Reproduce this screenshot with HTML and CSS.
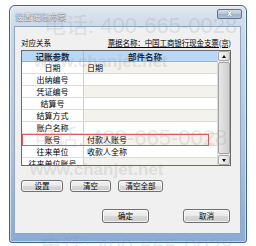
FILE: index.html
```html
<!DOCTYPE html>
<html>
<head>
<meta charset="utf-8">
<link rel="stylesheet" href="styles.css">
</head>
<body>
<div class="window">
  <div class="titlebar">
    <span class="title">设置记账方案</span>
    <div class="close">x</div>
  </div>
  <div class="client">
    <div class="info">
      <span class="label">对应关系</span>
      <span class="bill">票据名称：中国工商银行现金支票(京)</span>
    </div>
    <div class="grid">
      <div class="rows">
        <div class="row head"><div class="c1">记账参数</div><div class="c2">部件名称</div></div>
        <div class="row alt"><div class="c1">日期</div><div class="c2">日期</div></div>
        <div class="row"><div class="c1">出纳编号</div><div class="c2"></div></div>
        <div class="row alt"><div class="c1">凭证编号</div><div class="c2"></div></div>
        <div class="row"><div class="c1">结算号</div><div class="c2"></div></div>
        <div class="row alt"><div class="c1">结算方式</div><div class="c2"></div></div>
        <div class="row"><div class="c1">账户名称</div><div class="c2"></div></div>
        <div class="row alt"><div class="c1">账号</div><div class="c2">付款人账号</div></div>
        <div class="row"><div class="c1">往来单位</div><div class="c2">收款人全称</div></div>
        <div class="row alt"><div class="c1">往来单位账号</div><div class="c2"></div></div>
      </div>
      <div class="scrollbar">
        <div class="arrow up"></div>
        <div class="thumb"></div>
        <div class="arrow down"></div>
      </div>
      <div class="highlight"></div>
    </div>
    <div class="btnrow">
      <button class="btn w42">设置</button>
      <button class="btn w41">清空</button>
      <button class="btn w45">清空全部</button>
    </div>
    <div class="okrow">
      <button class="btn big">确定</button>
      <button class="btn big">取消</button>
    </div>
  </div>
</div>
<div class="watermarks">
  <div class="wm phone p1">电话: 400-665-0028</div>
  <div class="wm site s1">www.chanjet.net</div>
  <div class="wm phone p2">电话: 400-665-0028</div>
  <div class="wm site s2">www.chanjet.net</div>
  <div class="wm phone p3">电话: 400-665-0028</div>
</div>
</body>
</html>
```
FILE: styles.css
```css
html, body {
  margin: 0;
  padding: 0;
}
body {
  width: 256px;
  height: 246px;
  overflow: hidden;
  background: #ffffff;
  position: relative;
  font-family: "Noto Sans CJK SC", "Noto Sans", sans-serif;
  font-size: 8px;
  color: #000000;
}
.window {
  margin: 5px 0 0 9px;
  width: 238px;
  height: 238px;
  box-sizing: border-box;
  border: 1px solid #3f6390;
  border-radius: 6px 6px 3px 3px;
  background: linear-gradient(#dfe8f1 0, #ccdae8 20px, #b0c6df 55%, #8aabd2 100%);
  display: flex;
  flex-direction: column;
  padding: 0 5px 8px 4px;
  box-shadow: inset 0 0 0 1px rgba(255,255,255,0.5);
}
.titlebar {
  height: 20px;
  display: flex;
  justify-content: space-between;
  align-items: flex-start;
}
.title {
  margin: 5px 0 0 1px;
  font-size: 8.5px;
  line-height: 10px;
  color: #ffffff;
  text-shadow: 0 0 1px rgba(20, 30, 45, 0.9), 0 1px 1px rgba(40, 55, 75, 0.5);
}
.close {
  margin: 3px -1px 0 0;
  width: 25px;
  height: 10px;
  box-sizing: border-box;
  border: 1px solid #5d7491;
  border-radius: 2px;
  background: linear-gradient(#d3dde8 0, #b8c7d8 50%, #9fb2c8 51%, #b2c3d6 100%);
  color: #ffffff;
  font-family: "DejaVu Sans", sans-serif;
  font-size: 8px;
  line-height: 7px;
  text-align: center;
  font-weight: bold;
  text-shadow: 0 0 1px #333;
}
.client {
  flex: 1;
  background: #f0f0f0;
  border: 1px solid #90a6c0;
  padding: 0 9px 0 6px;
  display: flex;
  flex-direction: column;
}
.info {
  margin-top: 9px;
  height: 12px;
  display: flex;
  justify-content: space-between;
  align-items: center;
  font-size: 7.5px;
}
.bill {
  text-decoration: underline;
  letter-spacing: -0.1px;
}
.grid {
  position: relative;
  margin-top: 2px;
  height: 116px;
  box-sizing: border-box;
  border: 1px solid #6a6a6a;
  display: flex;
  background: #ffffff;
  overflow: hidden;
}
.rows {
  flex: 1;
  display: flex;
  flex-direction: column;
}
.row {
  height: 12px;
  flex: none;
  display: flex;
  box-sizing: border-box;
  border-bottom: 1px solid #dcdcd4;
  background: #ffffff;
  line-height: 11px;
}
.row.alt {
  background: #f3f2ec;
}
.row.head {
  height: 11px;
  background: #b9d7f6;
  border-bottom: 1px solid #8fb3dc;
  font-size: 8.5px;
  line-height: 10px;
  font-weight: bold;
  color: #1a2a3a;
}
.c1 {
  width: 62px;
  flex: none;
  box-sizing: border-box;
  border-right: 1px solid #d0d0c8;
  text-align: center;
  white-space: nowrap;
  background: #ffffff;
}
.row.head .c1 {
  background: #b9d7f6;
  border-right-color: #a0c0e4;
}
.c2 {
  flex: 1;
  padding-left: 3px;
  white-space: nowrap;
}
.row.head .c2 {
  padding-left: 44px;
}
.scrollbar {
  width: 12px;
  flex: none;
  background: #e9e9e9;
  display: flex;
  flex-direction: column;
  border-left: 1px solid #d8d8d8;
}
.arrow {
  height: 10px;
  box-sizing: border-box;
  border: 1px solid #a8a8a8;
  border-radius: 2px;
  background: linear-gradient(90deg, #f4f4f4, #dcdcdc);
  position: relative;
}
.arrow::after {
  content: "";
  position: absolute;
  left: 3px;
  top: 3px;
  border-left: 2px solid transparent;
  border-right: 2px solid transparent;
}
.arrow.up::after {
  border-bottom: 3px solid #111;
}
.arrow.down::after {
  border-top: 3px solid #111;
}
.thumb {
  flex: 1;
  margin: 1px 0;
  box-sizing: border-box;
  border: 1px solid #a4a4a4;
  border-radius: 2px;
  background: linear-gradient(90deg, #e6e6e6, #cfcfcf);
}
.highlight {
  position: absolute;
  left: 0;
  top: 83px;
  width: 187px;
  height: 12px;
  box-sizing: border-box;
  border: 1px solid #e05a5a;
}
.btnrow {
  margin-top: 14px;
  display: flex;
  gap: 7px;
}
.okrow {
  margin-top: 17px;
  display: flex;
  justify-content: flex-end;
  gap: 34px;
  padding-right: 1px;
}
.btn {
  height: 12px;
  padding: 0;
  box-sizing: border-box;
  border: 1px solid #707070;
  border-radius: 3px;
  background: linear-gradient(#f3f3f3 0, #e8e8e8 50%, #d8d8d8 51%, #cdcdcd 100%);
  box-shadow: inset 0 0 0 1px rgba(255,255,255,0.7);
  font-family: "Noto Sans CJK SC", sans-serif;
  font-size: 7.5px;
  line-height: 10px;
  color: #000000;
}
.w42 { width: 42px; }
.w41 { width: 41px; }
.w45 { width: 45px; }
.btn.big {
  width: 47px;
  height: 14px;
}
.watermarks {
  position: absolute;
  left: 0;
  top: 0;
  width: 256px;
  height: 246px;
  overflow: hidden;
  pointer-events: none;
}
.wm {
  position: absolute;
  white-space: nowrap;
  font-family: "Liberation Sans", "Noto Sans CJK SC", sans-serif;
  color: rgba(140, 140, 140, 0.2);
}
.phone {
  font-size: 22px;
  line-height: 22px;
}
.site {
  font-size: 17px;
  line-height: 17px;
  font-weight: bold;
}
.p1 { left: 44px; top: 15px; }
.s1 { left: 34px; top: 53px; }
.p2 { left: 34px; top: 127px; }
.s2 { left: 30px; top: 161px; }
.p3 { left: 40px; top: 236px; height: 10px; overflow: hidden; }
```
